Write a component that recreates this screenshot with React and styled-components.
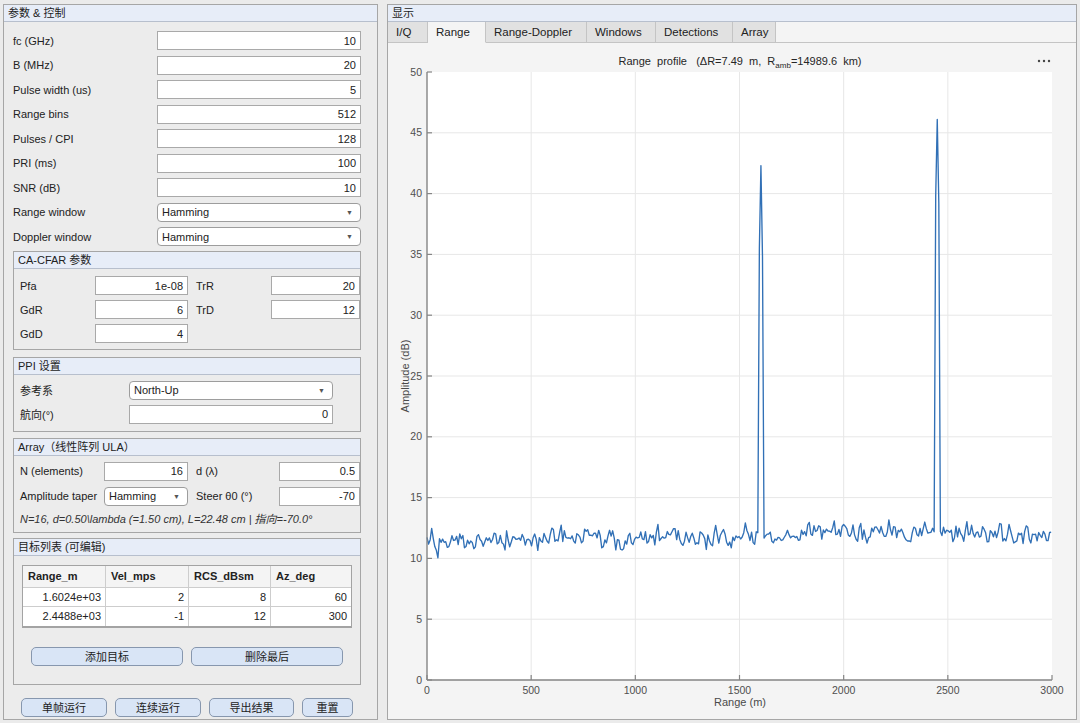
import React from "react";
import styled, { createGlobalStyle } from "styled-components";

const GlobalStyle = createGlobalStyle`
  html, body { margin: 0; padding: 0; background: #ebebeb; }
  body {
    font-family: "Liberation Sans", "Noto Sans CJK SC", Arial, sans-serif;
    font-size: 11px;
    color: #222;
  }
  * { box-sizing: border-box; }
`;

const Page = styled.div`
  display: flex;
  gap: 9px;
  padding: 4px 3px 3px 3px;
  width: 1080px;
  height: 723px;
  overflow: hidden;
`;

const Panel = styled.div`
  width: ${(p) => p.$w}px;
  height: 716px;
  border: 1px solid #a6a6a6;
  background: ${(p) => p.$bg || "#ececec"};
  display: flex;
  flex-direction: column;
  overflow: hidden;
`;

const TitleBar = styled.div`
  height: 17px;
  flex: none;
  line-height: 16px;
  padding: 0 4px;
  background: #e7edf8;
  border-bottom: 1px solid #b7bfcd;
  white-space: nowrap;
`;

const Form = styled.div`
  padding: 9px 16px 0 9px;
  display: flex;
  flex-direction: column;
`;

const Row = styled.div`
  display: grid;
  grid-template-columns: ${(p) => p.$cols || "144px 204px"};
  align-items: center;
  height: 19px;
  flex: none;
  margin-bottom: ${(p) => p.$mb ?? 5.5}px;
`;

const Label = styled.span`
  white-space: nowrap;
`;

const Field = styled.div`
  height: 19px;
  background: #fff;
  border: 1px solid #a9a9a9;
  display: flex;
  align-items: center;
  justify-content: flex-end;
  padding: 0 4px;
`;

const Select = styled.div`
  height: 19px;
  background: #fff;
  border: 1px solid #9d9d9d;
  border-radius: 4px;
  display: flex;
  align-items: center;
  justify-content: space-between;
  padding: 0 7px 0 4px;
`;

const Caret = styled.span`
  font-size: 7px;
  color: #555;
`;

const Group = styled.div`
  border: 1px solid #a6a6a6;
  flex: none;
  margin-bottom: ${(p) => p.$mb ?? 6}px;
`;

const GroupBody = styled.div`
  padding: ${(p) => p.$pad};
  display: flex;
  flex-direction: column;
`;

const Note = styled.div`
  font-style: italic;
  height: 14px;
  line-height: 14px;
  color: #333;
  white-space: nowrap;
`;

const Table = styled.div`
  width: 330px;
  border: 1px solid #a3a3a3;
  border-bottom: 2px solid #a3a3a3;
  background: #fff;
`;

const TRow = styled.div`
  display: grid;
  grid-template-columns: 83px 83px 82px 1fr;
  height: ${(p) => (p.$head ? 22 : 19)}px;
  background: ${(p) => (p.$head ? "#f4f4f4" : "#fff")};
  border-bottom: ${(p) => (p.$last ? "none" : "1px solid #cdcdcd")};
  font-weight: ${(p) => (p.$head ? "bold" : "normal")};
`;

const Cell = styled.div`
  display: flex;
  align-items: center;
  justify-content: ${(p) => (p.$head ? "flex-start" : "flex-end")};
  padding: 0 4px 0 5px;
  border-right: 1px solid #cdcdcd;
  &:last-child { border-right: none; }
`;

const ButtonRow = styled.div`
  display: flex;
  gap: ${(p) => p.$gap || 8}px;
  padding-left: ${(p) => p.$pl || 0}px;
  margin-top: ${(p) => p.$mt || 0}px;
`;

const Button = styled.div`
  width: ${(p) => p.$w}px;
  height: 19px;
  border: 1px solid #8797ae;
  border-radius: 5px;
  background: #d9e5f6;
  display: flex;
  align-items: center;
  justify-content: center;
  color: #222;
`;

const TabBar = styled.div`
  display: flex;
  height: 21px;
  flex: none;
  background: #f4f4f4;
  border-bottom: 1px solid #c4c4c4;
`;

const Tab = styled.div`
  width: ${(p) => p.$w}px;
  height: 21px;
  line-height: 20px;
  padding-left: 8px;
  font-size: 11.5px;
  color: #222;
  white-space: nowrap;
  background: ${(p) => (p.$active ? "#f4f4f4" : "#e1e1e1")};
  border-right: 1px solid #c4c4c4;
  border-bottom: 1px solid ${(p) => (p.$active ? "#f4f4f4" : "#c4c4c4")};
`;

const Content = styled.div`
  flex: 1;
  background: #f4f4f4;
`;

/* ---------- chart ---------- */

const X0 = 39, X1 = 664, Y0 = 29, Y1 = 637;
const sx = (r) => X0 + (r / 3000) * (X1 - X0);
const sy = (v) => Y1 - (v / 50) * (Y1 - Y0);

function mulberry32(a) {
  return function () {
    a |= 0;
    a = (a + 0x6d2b79f5) | 0;
    let t = Math.imul(a ^ (a >>> 15), 1 | a);
    t = (t + Math.imul(t ^ (t >>> 7), 61 | t)) ^ t;
    return ((t ^ (t >>> 14)) >>> 0) / 4294967296;
  };
}

function makeProfile() {
  const rnd = mulberry32(7491);
  const dR = 7.49;
  const pts = [];
  let prev = 0;
  for (let i = 0; i * dR <= 3000; i++) {
    const r = i * dR;
    const g = rnd() + rnd() + rnd() - 1.5;
    const n = 0.85 * g + 0.3 * prev;
    prev = g;
    const base = r < 2150 ? 11.3 + 0.95 * (r / 2150) : 12.25 - 0.3 * ((r - 2150) / 850);
    pts.push([r, base + n]);
  }
  pts[213][1] = 35.5;
  pts[214][1] = 42.3;
  pts[215][1] = 34.8;
  pts[326][1] = 39.8;
  pts[327][1] = 46.1;
  pts[328][1] = 39.2;
  return pts;
}

const profile = makeProfile();
const linePath = profile
  .map(([r, v], i) => `${i ? "L" : "M"}${sx(r).toFixed(2)},${sy(v).toFixed(2)}`)
  .join("");

const yTicks = [0, 5, 10, 15, 20, 25, 30, 35, 40, 45, 50];
const xTicks = [0, 500, 1000, 1500, 2000, 2500, 3000];

function RangeChart() {
  const tickFont = { fontSize: 10.5, fill: "#4f4f4f", fontFamily: "Liberation Sans, Arial, sans-serif" };
  return (
    <svg width="688" height="676" viewBox="0 0 688 676">
      <rect x={X0} y={Y0} width={X1 - X0} height={Y1 - Y0} fill="#fff" />
      {yTicks.slice(1, -1).map((v) => (
        <line key={"gy" + v} x1={X0} x2={X1} y1={sy(v)} y2={sy(v)} stroke="#e7e7e7" strokeWidth="1" />
      ))}
      {xTicks.slice(1, -1).map((v) => (
        <line key={"gx" + v} x1={sx(v)} x2={sx(v)} y1={Y0} y2={Y1} stroke="#e7e7e7" strokeWidth="1" />
      ))}
      <path d={linePath} fill="none" stroke="#3170b6" strokeWidth="1.35" strokeLinejoin="round" />
      <line x1={X0} x2={X0} y1={Y0} y2={Y1} stroke="#858585" strokeWidth="1.4" />
      <line x1={X0} x2={X1} y1={Y1} y2={Y1} stroke="#858585" strokeWidth="1.4" />
      {yTicks.map((v) => (
        <g key={"ty" + v}>
          <line x1={X0} x2={X0 + 5} y1={sy(v)} y2={sy(v)} stroke="#858585" strokeWidth="1.2" />
          <text x={X0 - 5} y={sy(v) + 3.5} textAnchor="end" style={tickFont}>{v}</text>
        </g>
      ))}
      {xTicks.map((v) => (
        <g key={"tx" + v}>
          <line x1={sx(v)} x2={sx(v)} y1={Y1} y2={Y1 - 5} stroke="#858585" strokeWidth="1.2" />
          <text x={sx(v)} y={Y1 + 14} textAnchor="middle" style={tickFont}>{v}</text>
        </g>
      ))}
      <text x="352" y="22" textAnchor="middle" xmlSpace="preserve"
        style={{ fontSize: 11, fill: "#262626", fontFamily: "Liberation Sans, Arial, sans-serif" }}>
        {"Range  profile   (ΔR=7.49  m,  R"}
        <tspan fontSize="8" dy="2.5">amb</tspan>
        <tspan dy="-2.5">{"=14989.6  km)"}</tspan>
      </text>
      <g fill="#444">
        <circle cx="651" cy="18" r="1.2" />
        <circle cx="656" cy="18" r="1.2" />
        <circle cx="661" cy="18" r="1.2" />
      </g>
      <text x="352" y="663" textAnchor="middle"
        style={{ fontSize: 11, fill: "#4a4a4a", fontFamily: "Liberation Sans, Arial, sans-serif" }}>
        Range (m)
      </text>
      <text transform="translate(21 333) rotate(-90)" textAnchor="middle"
        style={{ fontSize: 11, fill: "#4a4a4a", fontFamily: "Liberation Sans, Arial, sans-serif" }}>
        Amplitude (dB)
      </text>
    </svg>
  );
}

/* ---------- data ---------- */

const params = [
  ["fc (GHz)", "10"],
  ["B (MHz)", "20"],
  ["Pulse width (us)", "5"],
  ["Range bins", "512"],
  ["Pulses / CPI", "128"],
  ["PRI (ms)", "100"],
  ["SNR (dB)", "10"],
];

const targets = [
  ["1.6024e+03", "2", "8", "60"],
  ["2.4488e+03", "-1", "12", "300"],
];

const tabs = [
  ["I/Q", 40],
  ["Range", 58, true],
  ["Range-Doppler", 101],
  ["Windows", 69],
  ["Detections", 77],
  ["Array", 43],
];

const cfarCols = "75px 93px 8px 75px 1fr";
const arrayCols = "84px 84px 8px 83px 1fr";

export default function App() {
  return (
    <>
      <GlobalStyle />
      <Page>
        <Panel $w={375}>
          <TitleBar>参数 &amp; 控制</TitleBar>
          <Form>
            {params.map(([l, v]) => (
              <Row key={l}>
                <Label>{l}</Label>
                <Field>{v}</Field>
              </Row>
            ))}
            <Row>
              <Label>Range window</Label>
              <Select>Hamming<Caret>▼</Caret></Select>
            </Row>
            <Row $mb={5}>
              <Label>Doppler window</Label>
              <Select>Hamming<Caret>▼</Caret></Select>
            </Row>

            <Group $mb={6.5}>
              <TitleBar>CA-CFAR 参数</TitleBar>
              <GroupBody $pad="7px 0 6px 6px">
                <Row $cols={cfarCols} $mb={5}>
                  <Label>Pfa</Label><Field>1e-08</Field><span />
                  <Label>TrR</Label><Field>20</Field>
                </Row>
                <Row $cols={cfarCols} $mb={5}>
                  <Label>GdR</Label><Field>6</Field><span />
                  <Label>TrD</Label><Field>12</Field>
                </Row>
                <Row $cols={cfarCols} $mb={0}>
                  <Label>GdD</Label><Field>4</Field>
                </Row>
              </GroupBody>
            </Group>

            <Group $mb={6}>
              <TitleBar>PPI 设置</TitleBar>
              <GroupBody $pad="6px 0 7px 6px">
                <Row $cols="109px 204px" $mb={5}>
                  <Label>参考系</Label>
                  <Select>North-Up<Caret>▼</Caret></Select>
                </Row>
                <Row $cols="109px 204px" $mb={0}>
                  <Label>航向(°)</Label>
                  <Field>0</Field>
                </Row>
              </GroupBody>
            </Group>

            <Group $mb={5}>
              <TitleBar>Array（线性阵列 ULA）</TitleBar>
              <GroupBody $pad="6px 0 6px 6px">
                <Row $cols={arrayCols} $mb={6}>
                  <Label>N (elements)</Label><Field>16</Field><span />
                  <Label>d (λ)</Label><Field>0.5</Field>
                </Row>
                <Row $cols={arrayCols} $mb={6}>
                  <Label>Amplitude taper</Label>
                  <Select>Hamming<Caret>▼</Caret></Select><span />
                  <Label>Steer θ0 (°)</Label><Field>-70</Field>
                </Row>
                <Note>N=16, d=0.50\lambda (=1.50 cm), L=22.48 cm | 指向=-70.0°</Note>
              </GroupBody>
            </Group>

            <Group $mb={13}>
              <TitleBar>目标列表 (可编辑)</TitleBar>
              <GroupBody $pad="9px 8px 18px 8px">
                <Table>
                  <TRow $head>
                    {["Range_m", "Vel_mps", "RCS_dBsm", "Az_deg"].map((h) => (
                      <Cell key={h} $head>{h}</Cell>
                    ))}
                  </TRow>
                  {targets.map((t, i) => (
                    <TRow key={i} $last={i === targets.length - 1}>
                      {t.map((c, j) => (
                        <Cell key={j}>{c}</Cell>
                      ))}
                    </TRow>
                  ))}
                </Table>
                <ButtonRow $pl={9} $mt={19}>
                  <Button $w={152}>添加目标</Button>
                  <Button $w={152}>删除最后</Button>
                </ButtonRow>
              </GroupBody>
            </Group>

            <ButtonRow $pl={8}>
              <Button $w={86}>单帧运行</Button>
              <Button $w={86}>连续运行</Button>
              <Button $w={85}>导出结果</Button>
              <Button $w={51}>重置</Button>
            </ButtonRow>
          </Form>
        </Panel>

        <Panel $w={690} $bg="#f4f4f4">
          <TitleBar>显示</TitleBar>
          <TabBar>
            {tabs.map(([t, w, a]) => (
              <Tab key={t} $w={w} $active={a}>{t}</Tab>
            ))}
          </TabBar>
          <Content>
            <RangeChart />
          </Content>
        </Panel>
      </Page>
    </>
  );
}
